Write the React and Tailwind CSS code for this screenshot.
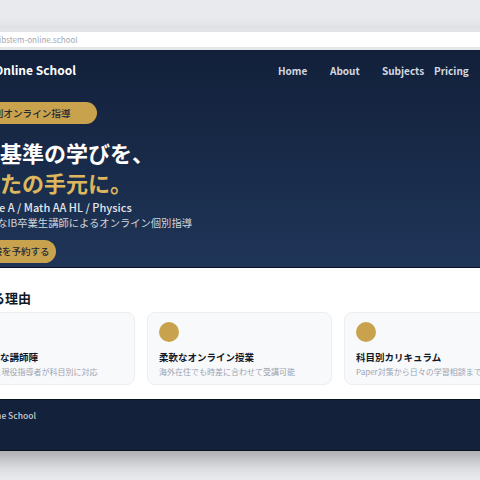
const reasons = [
  { title: "経験豊富な講師陣", text: "IB卒業生と現役指導者が科目別に対応" },
  { title: "柔軟なオンライン授業", text: "海外在住でも時差に合わせて受講可能" },
  { title: "科目別カリキュラム", text: "Paper対策から日々の学習相談まで" },
];

const links = ["Home", "About", "Subjects", "Pricing", "Contact"];

function ReasonCard({ title, text }) {
  return (
    <div className="bg-[#f8f9fb] border border-[#eceef2] rounded-[8px] pt-[9px] px-[11px] pb-[7px]">
      <div className="w-[20px] h-[20px] rounded-full bg-[#c9a24e]"></div>
      <p className="mt-[9px] text-[9.5px] leading-[12px] font-bold text-[#111827] whitespace-nowrap">{title}</p>
      <p className="mt-[4px] text-[8px] leading-[10px] text-[#9ca3af] whitespace-nowrap">{text}</p>
    </div>
  );
}

export default function App() {
  return (
    <div className="w-[480px] h-[480px] overflow-hidden bg-[#e9eaee] pt-[28px] font-['Noto_Sans_CJK_JP','Noto_Sans',sans-serif]">
      <div className="ml-[-60px] w-[620px] shadow-[0_10px_18px_rgba(0,0,0,0.28)]">
        {/* browser chrome */}
        <div className="h-[4px] bg-[#e2e3e7]"></div>
        <div className="h-[15px] bg-white flex items-center pl-[59px]">
          <span className="text-[8px] leading-[10px] text-[#a3a8b1]">ibstem-online.school</span>
        </div>
        <div className="h-[3px] bg-[#e4e6ea]"></div>

        <div className="bg-gradient-to-b from-[#12203a] to-[#1f3558] border-b border-[#0b1220]">
          <nav className="h-[40px] flex items-center justify-between pl-[7px] pr-[22px]">
            <span className="text-[12px] font-bold text-white whitespace-nowrap">IBSTEM Online School</span>
            <div className="flex">
              {links.map((l) => (
                <span key={l} className="w-[52px] text-[10px] font-semibold text-[#d3d8e0]">{l}</span>
              ))}
            </div>
          </nav>

          <section className="pl-[16px] pt-[12px] pb-[4px]">
            <div className="flex items-center w-fit h-[22px] rounded-full bg-[#c9a24e] pl-[9px] pr-[26px] text-[9.6px] font-medium text-[#1f2937] whitespace-nowrap">
              完全個別オンライン指導
            </div>
            <h1 className="mt-[13px] text-[22px] leading-[30px] font-bold text-white whitespace-nowrap">
              世界基準の学びを、
              <br />
              <span className="text-[#dcb75e]">あなたの手元に。</span>
            </h1>
            <p className="mt-[2px] ml-[-2px] text-[11px] leading-[16px] font-medium text-[#e5e7eb] whitespace-nowrap">
              Language A / Math AA HL / Physics
            </p>
            <p className="mt-[1px] text-[10.3px] leading-[14px] text-[#d1d5db] whitespace-nowrap">
              経験豊富なIB卒業生講師によるオンライン個別指導
            </p>
            <div className="mt-[10px] flex items-center w-fit h-[23px] rounded-full bg-[#c9a24e] pl-[8px] pr-[6px] text-[9.5px] font-medium text-[#1f2937] whitespace-nowrap">
              無料体験を予約する
            </div>
          </section>
        </div>

        <section className="bg-white pl-[10px] pt-[21px] pb-[14px]">
          <h2 className="ml-[3px] text-[13px] leading-[18px] font-bold text-[#111827] whitespace-nowrap">選ばれる理由</h2>
          <div className="mt-[5px] grid grid-cols-[185px_185px_185px] gap-[12px]">
            {reasons.map((r) => (
              <ReasonCard key={r.title} title={r.title} text={r.text} />
            ))}
          </div>
        </section>

        <footer className="h-[52px] bg-[#13213a] border-y border-[#0b1220] pl-[7px] pt-[10px]">
          <p className="text-[8.5px] leading-[11px] font-medium text-[#c9ced8] whitespace-nowrap">IBSTEM Online School</p>
        </footer>
      </div>
    </div>
  );
}
